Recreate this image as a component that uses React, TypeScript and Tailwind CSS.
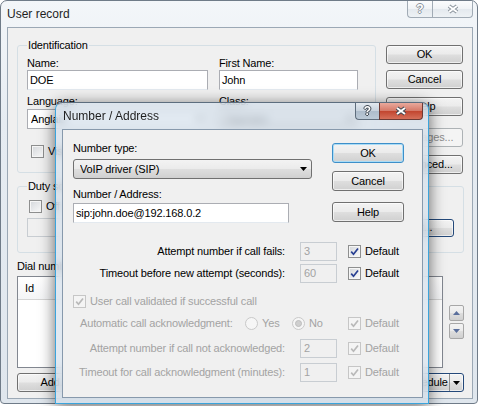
import React from 'react';

type Kids = { children?: React.ReactNode; className?: string };

const face =
  'bg-[linear-gradient(to_bottom,#f3f3f3_0%,#ebebeb_48%,#dedede_52%,#d0d0d0_100%)]';

function Button({
  children,
  className = '',
  variant = 'normal',
}: Kids & { variant?: 'normal' | 'default' | 'disabled' | 'dark' }) {
  const look =
    variant === 'disabled'
      ? 'border-[#adb2b5] bg-[#f4f4f4] text-[#8d8d8d]'
      : variant === 'default'
        ? `border-[#3d8fc9] ${face} shadow-[inset_0_0_0_1px_#aadcf6]`
        : variant === 'dark'
          ? `border-[#24497a] ${face} shadow-[inset_0_0_0_1px_#ffffffa0]`
          : `border-[#707070] ${face} shadow-[inset_0_0_0_1px_#ffffffa0]`;
  return (
    <div className={`flex shrink-0 items-center justify-center rounded-[3px] border ${look} ${className}`}>
      {children}
    </div>
  );
}

function TextBox({ value, className = '', disabled = false }: { value: string; className?: string; disabled?: boolean }) {
  return (
    <div
      className={`flex shrink-0 items-center border ${
        disabled
          ? 'border-[#c8cdd2] bg-[#f0f0f0] pl-[3px] text-[#a3a3a3]'
          : 'border-[#abadb3] border-b-[#e3e9ef] bg-white pl-[2px]'
      } ${className}`}
    >
      {value}
    </div>
  );
}

function Arrow({ color = '#000' }: { color?: string }) {
  return (
    <svg width="7" height="4" viewBox="0 0 7 4" className="shrink-0">
      <polygon points="0,0 7,0 3.5,4" fill={color} />
    </svg>
  );
}

function Combo({ text, className = '', white = false }: { text: string; className?: string; white?: boolean }) {
  return (
    <div
      className={`flex h-[20px] shrink-0 items-center border pr-[4px] ${
        white ? 'border-[#abadb3] bg-white pl-[3px]' : `rounded-[3px] border-[#707070] ${face} pl-[6px]`
      } ${className}`}
    >
      <span className="flex-1 truncate">{text}</span>
      <Arrow />
    </div>
  );
}

function Check({
  checked = false,
  disabled = false,
  label,
  className = '',
}: {
  checked?: boolean;
  disabled?: boolean;
  label?: string;
  className?: string;
}) {
  return (
    <div className={`flex shrink-0 items-center ${className}`}>
      <div
        className={`flex h-[13px] w-[13px] shrink-0 items-center justify-center border ${
          disabled
            ? 'border-[#c6c6c6] bg-[#f4f4f4]'
            : 'border-[#8e8f8f] bg-[linear-gradient(135deg,#d3d6da,#fbfbfb)] shadow-[inset_0_0_0_1px_#f6f6f6]'
        }`}
      >
        {checked && (
          <svg width="9" height="9" viewBox="0 0 9 9">
            <path
              d="M1.2 4.6 L3.5 7.2 L8 1.4"
              fill="none"
              stroke={disabled ? '#b9b9b9' : '#283f92'}
              strokeWidth="1.7"
            />
          </svg>
        )}
      </div>
      {label && <span className={`ml-[4px] ${disabled ? 'text-[#a3a3a3]' : ''}`}>{label}</span>}
    </div>
  );
}

function Radio({ selected = false, label, className = '' }: { selected?: boolean; label: string; className?: string }) {
  return (
    <div className={`flex shrink-0 items-center ${className}`}>
      <div className="flex h-[13px] w-[13px] shrink-0 items-center justify-center rounded-full border border-[#c9c9c9] bg-[#f6f6f6]">
        {selected && <div className="h-[7px] w-[7px] rounded-full border border-[#bdbdbd] bg-[#cfcfcf]" />}
      </div>
      <span className="ml-[4px] text-[#a3a3a3]">{label}</span>
    </div>
  );
}

function CaptionButtons({ active, helpW, closeW }: { active: boolean; helpW: string; closeW: string }) {
  const outline = active
    ? '[text-shadow:1px_0_#3d4650,-1px_0_#3d4650,0_1px_#3d4650,0_-1px_#3d4650]'
    : '[text-shadow:1px_0_#8a939c,-1px_0_#8a939c,0_1px_#8a939c,0_-1px_#8a939c]';
  return (
    <div className="flex h-[17px] shrink-0">
      <div
        className={`flex ${helpW} items-center justify-center rounded-bl-[4px] border border-t-0 border-r-0 ${
          active
            ? 'border-[#5e6d7c] bg-[linear-gradient(to_bottom,#e3e9ef,#c6d1dc_50%,#adbccb_51%,#bccad7)]'
            : 'border-[#a1abb5] bg-[linear-gradient(to_bottom,#fbfcfd,#f0f3f6_50%,#e4e9ee_51%,#eef2f5)]'
        }`}
      >
        <span className={`text-[12px] font-bold leading-[12px] tracking-normal text-white ${outline}`}>?</span>
      </div>
      <div
        className={`flex ${closeW} items-center justify-center rounded-br-[4px] border border-t-0 ${
          active
            ? 'border-[#6d3a34] bg-[linear-gradient(to_bottom,#e9a99c,#d47867_50%,#c2452f_51%,#d5705a)]'
            : 'border-[#a1abb5] bg-[linear-gradient(to_bottom,#fbfcfd,#f0f3f6_50%,#e4e9ee_51%,#eef2f5)]'
        }`}
      >
        <svg width="14" height="10" viewBox="0 0 14 10">
          <path d="M3 2 L11 8 M11 2 L3 8" stroke={active ? '#3d4650' : '#8a939c'} strokeWidth="4" />
          <path d="M3 2 L11 8 M11 2 L3 8" stroke="#ffffff" strokeWidth="2" />
        </svg>
      </div>
    </div>
  );
}

function Spin({ up }: { up: boolean }) {
  return (
    <div className={`flex h-[16px] w-[15px] items-center justify-center rounded-[2px] border border-[#a7a7a7] ${face}`}>
      <svg width="7" height="4" viewBox="0 0 7 4">
        <polygon points={up ? '0,4 7,4 3.5,0' : '0,0 7,0 3.5,4'} fill="#5a6f9c" />
      </svg>
    </div>
  );
}

function UserRecord() {
  return (
    <div className="flex h-[404px] w-[478px] flex-col rounded-t-[7px] rounded-b-[4px] border border-[#6f7b88] bg-[linear-gradient(to_bottom,#f3f6f9,#e6ecf2_30%,#dfe6ed)]">
      <div className="flex h-[26px] shrink-0 items-start justify-between">
        <span className="ml-[6px] mt-[6px] text-[12px] leading-[14px] tracking-normal text-[#1e1e1e]">User record</span>
        <div className="mr-[4px]">
          <CaptionButtons active={false} helpW="w-[25px]" closeW="w-[41px]" />
        </div>
      </div>

      <div className="ml-[6px] flex h-[372px] w-[466px] flex-col border border-[#9ba8b5] bg-[#f0f0f0] pl-[9px] pr-[8px] pt-[11px]">
        <div className="flex">
          <fieldset className="h-[134px] w-[359px] rounded-[3px] border border-[#d5dfe5] px-[9px]">
            <legend className="px-[1px]">Identification</legend>
            <div className="grid grid-cols-[181px_139px] gap-x-[11px] pt-[5px]">
              <span>Name:</span>
              <span>First Name:</span>
              <TextBox value="DOE" className="h-[20px]" />
              <TextBox value="John" className="h-[20px]" />
              <span className="mt-[5px]">Language:</span>
              <span className="mt-[5px]">Class:</span>
              <Combo white text="Anglais" className="mt-[1px]" />
              <Combo text="Operator" className="mt-[1px]" />
            </div>
            <Check label="Visible" className="ml-[4px] mt-[16px]" />
          </fieldset>

          <div className="ml-[10px] flex w-[77px] flex-col pt-[6px]">
            <Button className="h-[19px]">OK</Button>
            <Button className="mt-[6px] h-[19px]">Cancel</Button>
            <Button className="mt-[8px] h-[19px]">Help</Button>
            <Button variant="disabled" className="mt-[12px] h-[19px]">Messages...</Button>
            <Button className="mt-[8px] h-[19px]">Advanced...</Button>
          </div>
        </div>

        <fieldset className="mt-[6px] h-[73px] w-[447px] rounded-[3px] border border-[#d5dfe5] px-[9px]">
          <legend className="px-[1px]">Duty schedule</legend>
          <Check label="Off" className="ml-[2px] mt-[7px]" />
          <div className="mt-[5px] flex items-center">
            <TextBox disabled value="" className="h-[19px] flex-1" />
            <Button variant="dark" className="ml-[10px] h-[18px] w-[70px]">Edit...</Button>
          </div>
        </fieldset>

        <span className="mt-[7px]">Dial numbers:</span>
        <div className="mt-[3px] flex items-center">
          <div className="flex h-[92px] w-[426px] flex-col border border-[#828790] bg-white">
            <div className="flex h-[23px] border-b border-[#d5d5d5] bg-[linear-gradient(to_bottom,#ffffff,#f4f5f7)]">
              <div className="flex w-[90px] items-center border-r border-[#dfe2e7] pl-[7px]">Id</div>
              <div className="flex w-[150px] items-center border-r border-[#dfe2e7] pl-[7px]">Number</div>
              <div className="flex w-[170px] items-center border-r border-[#dfe2e7] pl-[7px]">Type</div>
            </div>
          </div>
          <div className="ml-[6px] flex flex-col gap-[2px]">
            <Spin up />
            <Spin up={false} />
          </div>
        </div>

        <div className="mt-[5px] flex h-[19px]">
          <Button className="w-[75px]">Add...</Button>
          <Button variant="dark" className="ml-auto w-[78px] !justify-between pl-[16px]">
            <span>Schedule</span>
            <span className="flex h-full items-center border-l border-[#8f8f8f] px-[3px]">
              <Arrow />
            </span>
          </Button>
        </div>
      </div>
    </div>
  );
}

function NumberDialog() {
  return (
    <div className="absolute left-[55px] top-[102px] flex h-[302px] w-[374px] flex-col rounded-t-[7px] border border-[#3aa4dc] border-t-[#5c6d7e] bg-[rgba(214,225,236,0.72)] shadow-[0_3px_16px_rgba(0,0,0,0.6)] backdrop-blur-[4px]">
      <div className="flex h-[26px] shrink-0 items-start justify-between">
        <span className="ml-[7px] mt-[6px] text-[12px] leading-[14px] tracking-normal text-[#1e1e1e]">
          Number / Address
        </span>
        <div className="mr-[5px]">
          <CaptionButtons active helpW="w-[24px]" closeW="w-[44px]" />
        </div>
      </div>

      <div className="mb-[5px] ml-[6px] mr-[5px] flex flex-1 flex-col border border-[#8799ac] bg-[#f0f0f0] pl-[10px] pt-[12px]">
        <div className="flex">
          <div className="flex w-[239px] flex-col">
            <span>Number type:</span>
            <Combo text="VoIP driver (SIP)" className="mt-[4px] w-[239px]" />
            <span className="mt-[9px]">Number / Address:</span>
            <TextBox value="sip:john.doe@192.168.0.2" className="mt-[2px] h-[20px] w-[216px]" />
          </div>
          <div className="ml-[20px] flex w-[72px] flex-col pt-[1px]">
            <Button variant="default" className="h-[20px]">OK</Button>
            <Button className="mt-[8px] h-[20px]">Cancel</Button>
            <Button className="mt-[11px] h-[20px]">Help</Button>
          </div>
        </div>

        <div className="mt-[19px] flex h-[19px] items-center">
          <span className="w-[212px] text-right">Attempt number if call fails:</span>
          <TextBox disabled value="3" className="ml-[15px] h-[19px] w-[37px]" />
          <Check checked label="Default" className="ml-[11px]" />
        </div>
        <div className="mt-[3px] flex h-[19px] items-center">
          <span className="w-[212px] text-right">Timeout before new attempt (seconds):</span>
          <TextBox disabled value="60" className="ml-[15px] h-[19px] w-[37px]" />
          <Check checked label="Default" className="ml-[11px]" />
        </div>

        <Check checked disabled label="User call validated if successful call" className="mt-[12px]" />

        <div className="mt-[9px] flex h-[13px] items-center text-[#a3a3a3]">
          <span className="w-[172px] pl-[7px]">Automatic call acknowledgment:</span>
          <Radio label="Yes" className="w-[47px]" />
          <Radio selected label="No" className="w-[56px]" />
          <Check checked disabled label="Default" />
        </div>

        <div className="mt-[9px] flex h-[19px] items-center text-[#a3a3a3]">
          <span className="w-[212px] text-right">Attempt number if call not acknowledged:</span>
          <TextBox disabled value="2" className="ml-[15px] h-[19px] w-[37px]" />
          <Check checked disabled label="Default" className="ml-[11px]" />
        </div>
        <div className="mt-[5px] flex h-[19px] items-center text-[#a3a3a3]">
          <span className="w-[212px] text-right">Timeout for call acknowledgment (minutes):</span>
          <TextBox disabled value="1" className="ml-[15px] h-[19px] w-[37px]" />
          <Check checked disabled label="Default" className="ml-[11px]" />
        </div>
      </div>
    </div>
  );
}

export default function App() {
  return (
    <div className="relative h-[406px] w-[480px] overflow-hidden bg-white font-['Liberation_Sans',Arial,sans-serif] text-[11px] leading-[13px] tracking-[-0.15px] text-black">
      <UserRecord />
      <NumberDialog />
    </div>
  );
}
